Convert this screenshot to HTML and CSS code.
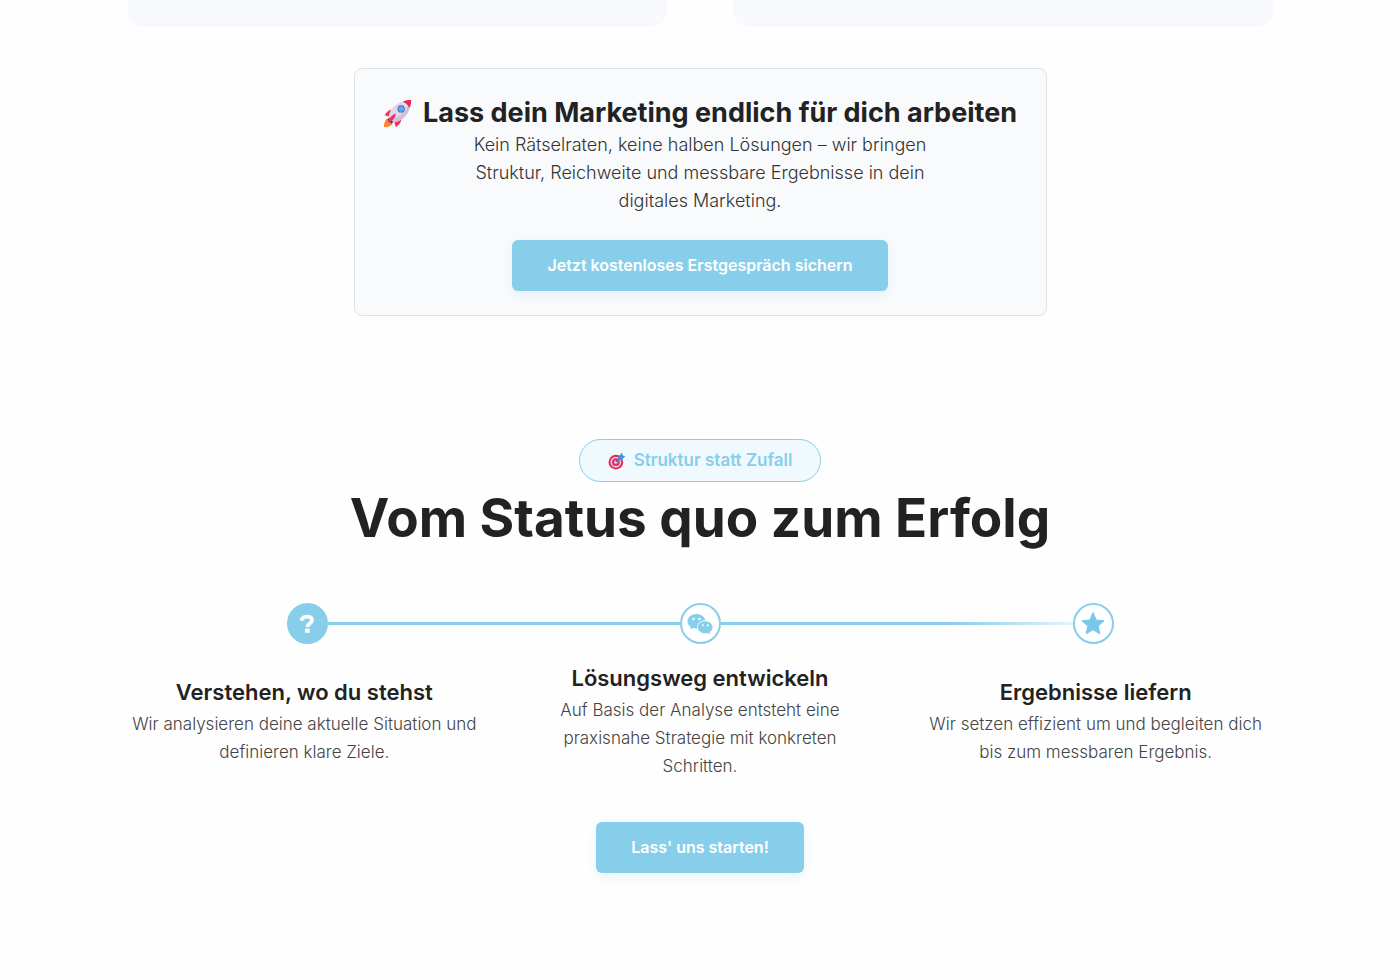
FILE: index.html
```
<!doctype html>
<html lang="de">
<head>
	<meta charset="UTF-8">
	<meta name="viewport" content="width=device-width, initial-scale=1">
	<title>Vom Status quo zum Erfolg</title>
	<link rel="stylesheet" href="styles.css">
</head>
<body>
	<div class="wrap">
		<div class="cards">
			<div class="card"></div>
			<div class="card"></div>
		</div>

		<section class="cta">
			<h3>
				<svg class="rocket" viewBox="0 0 32 32" aria-hidden="true">
					<path fill="#ff822d" d="M4 22c-2 2-3 5-3 9 4 0 7-1 9-3l1-4-3-3z"/>
					<path fill="#f92f60" d="M12 12c-4-1-8 1-10 6l7 2zM20 20c1 4-1 8-6 11l-2-8z"/>
					<path fill="#433b6b" d="M7 20l5 5-3 2-4-4z"/>
					<path fill="#e1d8ec" d="M6 20C8 9 17 1 30 2c1 13-7 22-18 24z"/>
					<path fill="#cdc2de" d="M30 2c1 13-7 22-18 24l-2-3C20 19 27 11 30 2z"/>
					<path fill="#f0244f" d="M22 3c3-2 6-2 9-2 0 3 0 6-2 9-1-3-4-6-7-7z"/>
					<path fill="#f92f60" d="M14 16c-5 2-7 5-9 10 5-2 9-4 9-10z"/>
					<circle cx="20" cy="11" r="4" fill="#46679f"/>
					<circle cx="20" cy="11" r="3" fill="#5aaef0"/>
				</svg>
				Lass dein Marketing endlich für dich arbeiten
			</h3>
			<p>Kein Rätselraten, keine halben Lösungen – wir bringen Struktur, Reichweite und messbare Ergebnisse in dein digitales Marketing.</p>
			<button class="btn" type="button">Jetzt kostenloses Erstgespräch sichern</button>
		</section>

		<section class="process">
			<div class="badge">
				<svg class="target" viewBox="0 0 32 32" aria-hidden="true">
					<circle cx="14" cy="18" r="13" fill="#e3285b"/>
					<circle cx="14" cy="18" r="9.500" fill="#e8d3e3"/>
					<circle cx="14" cy="18" r="7" fill="#d83a6c"/>
					<circle cx="14" cy="18" r="3" fill="#e8d3e3"/>
					<path stroke="#2f6fb5" stroke-width="2" d="M14 18l10-10"/>
					<path fill="#3d96e0" d="M18 9l7-8 1 5 5 1-7 7-6 1z"/>
				</svg>
				Struktur statt Zufall
			</div>
			<h2>Vom Status quo zum Erfolg</h2>

			<div class="track">
				<span class="dot active">
					<svg viewBox="0 0 24 24" aria-hidden="true">
						<path fill="none" stroke="#fff" stroke-width="4.500" d="M5 8C6 4.500 8.500 3 12 3c3.500 0 6 1.600 6 4.500 0 4.500-5.700 3.500-5.700 8"/>
						<rect x="9.500" y="17.500" width="5.800" height="5" rx="1" fill="#fff"/>
					</svg>
				</span>
				<span class="line"></span>
				<span class="dot">
					<svg class="chat" viewBox="0 0 26 22" aria-hidden="true">
						<path fill="#87ceeb" d="M9.500 1C4.500 1 .5 4.200.5 8.300c0 2.300 1.300 4.300 3.300 5.600L3 16.500l3.200-1.600c1 .3 2 .5 3.300.5h.7c-.8-4.600 3.300-8.200 8.200-8.200C17.600 3.600 13.900 1 9.500 1z"/>
						<path fill="#87ceeb" d="M18.200 8.300c-4.200 0-7.400 2.700-7.400 6s3.200 6 7.400 6c.9 0 1.800-.1 2.600-.4l2.500 1.400-.7-2.200c1.800-1.100 3-2.900 3-4.800 0-3.300-3.200-6-7.400-6z"/>
						<g fill="#fff">
							<circle cx="6.500" cy="6" r="1.200"/>
							<circle cx="12.500" cy="6" r="1.200"/>
							<circle cx="15.800" cy="12.300" r="1"/>
							<circle cx="20.800" cy="12.300" r="1"/>
						</g>
					</svg>
				</span>
				<span class="line fade"></span>
				<span class="dot">
					<svg viewBox="0 0 24 24" aria-hidden="true">
						<path fill="#78c8ea" stroke="#78c8ea" stroke-linejoin="round" d="M12 .5l3.200 7.500 8 .7-6 5.300 1.700 7.800L12 17.800 5.100 21.800l1.700-7.800-6-5.300 8-.7z"/>
					</svg>
				</span>
			</div>

			<div class="steps">
				<div class="step">
					<h4>Verstehen, wo du stehst</h4>
					<p>Wir analysieren deine aktuelle Situation und definieren klare Ziele.</p>
				</div>
				<div class="step">
					<h4>Lösungsweg entwickeln</h4>
					<p>Auf Basis der Analyse entsteht eine praxisnahe Strategie mit konkreten Schritten.</p>
				</div>
				<div class="step">
					<h4>Ergebnisse liefern</h4>
					<p>Wir setzen effizient um und begleiten dich bis zum messbaren Ergebnis.</p>
				</div>
			</div>

			<button class="btn" type="button">Lass' uns starten!</button>
		</section>
	</div>
</body>
</html>
```
FILE: styles.css
```
*{
	margin: 0;
	padding: 0;
	box-sizing: border-box;
}
body{
	background: #fefefe;
	color: #222;
	font-family: Inter, "Liberation Sans", sans-serif;
	text-align: center;
}
.wrap{
	max-width: 1177px;
	margin: 0 auto;
	padding: 0 16px 108px;
}
.cards{
	display: grid;
	grid-template-columns: 1fr 1fr;
	gap: 66px;
}
.card{
	padding-top: 27px;
	background: #f8f9fd;
	border-radius: 0 0 16px 16px;
}
.cta{
	max-width: 693px;
	margin: 41px auto 0;
	padding: 26px 24px 24px;
	border: 1px solid #dde2e6;
	border-radius: 8px;
	background: #f9fafc;
}
.cta h3{
	display: flex;
	align-items: center;
	justify-content: center;
	gap: 11px;
	font-size: 27px;
	line-height: 36px;
	font-weight: 700;
}
.rocket{
	flex: none;
	width: 29px;
	height: 29px;
}
p{
	font-weight: 300;
	color: #333;
}
.cta p{
	max-width: 480px;
	margin: 0 auto 25px;
	font-size: 18px;
	line-height: 28px;
}
.btn{
	padding: 0 35px;
	border: 0;
	border-radius: 6px;
	background: #87ceeb;
	box-shadow: 0 4px 12px rgba(135, 206, 235, 0.2);
	color: #fff;
	font-family: inherit;
	font-size: 16px;
	line-height: 51px;
	font-weight: 600;
	cursor: pointer;
}
.process{
	margin-top: 123px;
}
.badge{
	display: inline-flex;
	align-items: center;
	gap: 8px;
	padding: 0 28px;
	border: 1px solid #87ceeb;
	border-radius: 22px;
	background: #f0f9fe;
	color: #87ceeb;
	font-size: 17px;
	line-height: 41px;
	font-weight: 600;
}
.target{
	width: 18px;
	height: 18px;
}
h2{
	font-size: 53px;
	line-height: 72px;
	font-weight: 700;
}
.track{
	display: flex;
	align-items: center;
	max-width: 827px;
	margin: 49px auto 16px;
}
.dot{
	display: flex;
	align-items: center;
	justify-content: center;
	flex: none;
	width: 41px;
	height: 41px;
	border: 2px solid #87ceeb;
	border-radius: 50%;
	background: #fff;
}
.dot svg{
	width: 24px;
	height: 24px;
}
.dot.active{
	background: #87ceeb;
}
.dot.active svg{
	width: 20px;
	height: 20px;
}
.dot .chat{
	width: 26px;
	height: 22px;
}
.line{
	flex: 1;
	height: 3px;
	background: #87ceeb;
}
.line.fade{
	background: linear-gradient(90deg, #87ceeb 65%, #e4f4fb);
}
.steps{
	display: grid;
	grid-template-columns: repeat(3, 1fr);
	align-items: center;
	gap: 42px;
	margin-bottom: 42px;
}
.step h4{
	font-size: 22px;
	line-height: 36px;
	font-weight: 600;
}
.step p{
	padding: 0 3px;
	font-size: 17px;
	line-height: 28px;
	color: #444;
}
@media (max-width: 800px){
	.cards, .steps{
		grid-template-columns: 1fr;
	}
	h2{
		font-size: 36px;
		line-height: 44px;
	}
}
```
